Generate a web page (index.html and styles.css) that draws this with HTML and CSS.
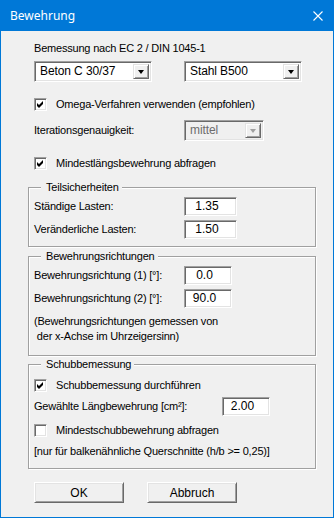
FILE: index.html
```html
<!DOCTYPE html>
<html lang="de">

<head>
    <meta charset="UTF-8">
    <title>Bewehrung</title>
    <link rel="stylesheet" href="styles.css">
</head>

<body>
    <div class="window">
        <div class="titlebar">
            <span class="title">Bewehrung</span>
            <svg class="close" width="10" height="10" viewBox="0 0 10 10">
                <path d="M0.5 0.5 L9.5 9.5 M9.5 0.5 L0.5 9.5" stroke="#fff" stroke-width="1.1" fill="none"/>
            </svg>
        </div>
        <div class="content">
            <div class="label-line">Bemessung nach EC 2 / DIN 1045-1</div>
            <div class="combo-row">
                <div class="combo combo-wide"><span class="combo-text">Beton C 30/37</span><span class="combo-btn"><i class="arrow"></i></span></div>
                <div class="combo combo-wide"><span class="combo-text">Stahl B500</span><span class="combo-btn"><i class="arrow"></i></span></div>
            </div>

            <label class="check-row cb-omega">
                <span class="box checked"><svg width="9" height="9" viewBox="0 0 9 9"><path d="M1 3 L3 5 L7 1 V4 L3 8 L1 6Z" fill="#000"/></svg></span>
                <span>Omega-Verfahren verwenden (empfohlen)</span>
            </label>

            <div class="field-row iter-row">
                <span class="field-label">Iterationsgenauigkeit:</span>
                <div class="combo combo-small disabled"><span class="combo-text">mittel</span><span class="combo-btn"><i class="arrow"></i></span></div>
            </div>

            <label class="check-row cb-mindest">
                <span class="box checked"><svg width="9" height="9" viewBox="0 0 9 9"><path d="M1 3 L3 5 L7 1 V4 L3 8 L1 6Z" fill="#000"/></svg></span>
                <span>Mindestlängsbewehrung abfragen</span>
            </label>

            <fieldset class="group group-teil">
                <legend>Teilsicherheiten</legend>
                <div class="field-row">
                    <span class="field-label">Ständige Lasten:</span>
                    <span class="edit edit-54">1.35</span>
                </div>
                <div class="field-row">
                    <span class="field-label">Veränderliche Lasten:</span>
                    <span class="edit edit-54">1.50</span>
                </div>
            </fieldset>

            <fieldset class="group group-richt">
                <legend>Bewehrungsrichtungen</legend>
                <div class="field-row">
                    <span class="field-label">Bewehrungsrichtung (1) [°]:</span>
                    <span class="edit edit-48">0.0</span>
                </div>
                <div class="field-row">
                    <span class="field-label">Bewehrungsrichtung (2) [°]:</span>
                    <span class="edit edit-48">90.0</span>
                </div>
                <div class="note">(Bewehrungsrichtungen gemessen von<br>&nbsp;der x-Achse im Uhrzeigersinn)</div>
            </fieldset>

            <fieldset class="group group-schub">
                <legend>Schubbemessung</legend>
                <label class="check-row">
                    <span class="box checked"><svg width="9" height="9" viewBox="0 0 9 9"><path d="M1 3 L3 5 L7 1 V4 L3 8 L1 6Z" fill="#000"/></svg></span>
                    <span>Schubbemessung durchführen</span>
                </label>
                <div class="field-row wide-label">
                    <span class="field-label">Gewählte Längbewehrung [cm²]:</span>
                    <span class="edit edit-48">2.00</span>
                </div>
                <label class="check-row cb-schub2">
                    <span class="box"></span>
                    <span>Mindestschubbewehrung abfragen</span>
                </label>
                <div class="hint">[nur für balkenähnliche Querschnitte (h/b &gt;= 0,25)]</div>
            </fieldset>

            <div class="buttons">
                <button class="btn">OK</button>
                <button class="btn">Abbruch</button>
            </div>
        </div>
    </div>
</body>

</html>
```

FILE: styles.css
```css
* {
    padding: 0;
    margin: 0;
    box-sizing: border-box;
}
body {
    background: #fff;
    font-family: "Liberation Sans", Arial, sans-serif;
    font-size: 11px;
    line-height: 13px;
    letter-spacing: -0.2px;
    color: #000;
}
.window {
    width: 334px;
    height: 518px;
    background: #0078d7;
    padding: 0 1px 1px 1px;
    display: flex;
    flex-direction: column;
}
.titlebar {
    height: 31px;
    display: flex;
    align-items: center;
    justify-content: space-between;
    padding: 0 10px 1px 9px;
    color: #fff;
    letter-spacing: 0;
}
.title {
    font-family: "Noto Sans", "Open Sans", sans-serif;
    font-size: 12px;
}
.close {
    display: block;
    margin-top: 1px;
}
.content {
    flex: 1;
    background: #f0f0f0;
    padding: 11px 0 0 33px;
}
.label-line {
    height: 13px;
}

/* combo boxes */
.combo-row {
    display: flex;
    gap: 32px;
    margin-top: 6px;
}
.combo {
    height: 21px;
    display: flex;
    align-items: stretch;
    background: #fff;
    border: 1px solid;
    border-color: #a0a0a0 #fff #fff #a0a0a0;
    box-shadow: inset 1px 1px 0 #696969, inset -1px -1px 0 #e3e3e3;
    padding: 2px 2px 2px 2px;
}
.combo-wide {
    width: 118px;
}
.combo-small {
    width: 80px;
}
.combo-text {
    flex: 1;
    padding-left: 3px;
    line-height: 15px;
    font-size: 12px;
    letter-spacing: -0.1px;
}
.combo-btn {
    width: 16px;
    background: #f0f0f0;
    border: 1px solid;
    border-color: #e3e3e3 #696969 #696969 #e3e3e3;
    box-shadow: inset 1px 1px 0 #fff, inset -1px -1px 0 #a0a0a0;
    display: flex;
    align-items: center;
    justify-content: center;
}
.arrow {
    width: 0;
    height: 0;
    border-left: 3.5px solid transparent;
    border-right: 3.5px solid transparent;
    border-top: 4px solid #000;
    margin-top: 1px;
}
.combo.disabled {
    background: #f0f0f0;
}
.combo.disabled .combo-text {
    color: #6d6d6d;
}
.combo.disabled .arrow {
    border-top-color: #a0a0a0;
}

/* checkboxes */
.check-row {
    display: flex;
    align-items: center;
    height: 13px;
    gap: 9px;
}
.cb-omega {
    margin-top: 16px;
}
.cb-mindest {
    margin-top: 16px;
}
.box {
    width: 13px;
    height: 13px;
    background: #fff;
    border: 1px solid;
    border-color: #a0a0a0 #fff #fff #a0a0a0;
    box-shadow: inset 1px 1px 0 #696969, inset -1px -1px 0 #e3e3e3;
    display: flex;
    align-items: center;
    justify-content: center;
}
.box svg {
    display: block;
}

/* rows with label + field */
.field-row {
    display: grid;
    grid-template-columns: 150px auto;
    align-items: center;
}
.iter-row {
    margin-top: 9px;
}
.wide-label {
    grid-template-columns: 188px auto;
}
.edit {
    display: block;
    height: 19px;
    background: #fff;
    border: 1px solid;
    border-color: #a0a0a0 #fff #fff #a0a0a0;
    box-shadow: inset 1px 1px 0 #696969, inset -1px -1px 0 #e3e3e3;
    text-align: center;
    padding-right: 7px;
    line-height: 17px;
    font-size: 12px;
    letter-spacing: 0;
}
.edit-54 {
    width: 53px;
}
.edit-48 {
    width: 48px;
}

/* group boxes */
.group {
    width: 288px;
    margin-left: -6px;
    border: 1px solid #a0a0a0;
    box-shadow: 1px 1px 0 #fff, inset 1px 1px 0 #fff;
    padding: 3px 0 7px 5px;
    display: flex;
    flex-direction: column;
    gap: 4px;
}
.group legend {
    margin-left: 7px;
    padding: 0 3px 0 5px;
    background: #f0f0f0;
    line-height: 13px;
}
.group-teil {
    margin-top: 11px;
}
.group-richt {
    margin-top: 3px;
    padding-bottom: 11px;
}
.group-schub {
    margin-top: 2px;
    padding-top: 8px;
    padding-bottom: 10px;
    gap: 0;
}
.note {
    margin-top: 2px;
    line-height: 15px;
}
.group-schub .wide-label {
    margin-top: 5px;
}
.cb-schub2 {
    margin-top: 8px;
}
.hint {
    margin-top: 8px;
}

/* buttons */
.buttons {
    display: flex;
    gap: 23px;
    margin-top: 13px;
}
.btn {
    width: 90px;
    height: 21px;
    font-family: "Liberation Sans", Arial, sans-serif;
    font-size: 12px;
    background: #f0f0f0;
    border: 1px solid;
    border-color: #fff #696969 #696969 #fff;
    box-shadow: inset 1px 1px 0 #e3e3e3, inset -1px -1px 0 #a0a0a0;
    color: #000;
}
```
